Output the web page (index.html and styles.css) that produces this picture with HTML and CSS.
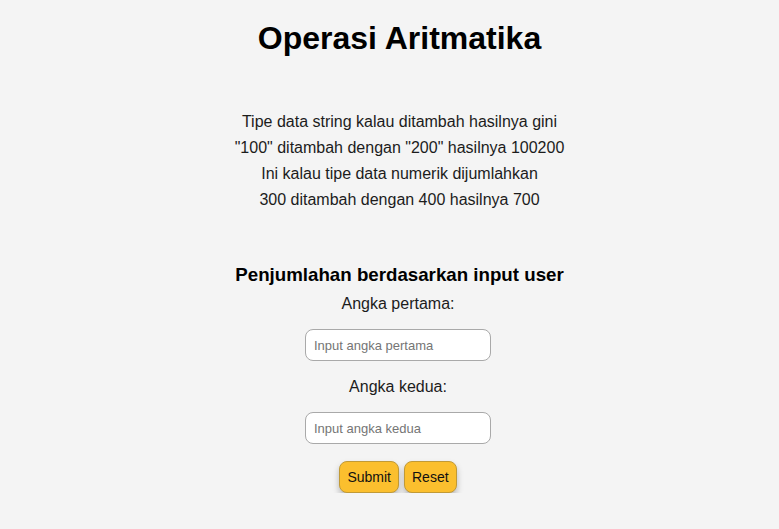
FILE: index.html
```html
<!DOCTYPE html>
<html lang="id">
<head>
<meta charset="utf-8">
<title>Operasi Aritmatika</title>
<link rel="stylesheet" href="styles.css">
</head>
<body>
<main class="page">
  <h1 class="title">Operasi Aritmatika</h1>
  <p class="info">Tipe data string kalau ditambah hasilnya gini<br>"100" ditambah dengan "200" hasilnya 100200<br>Ini kalau tipe data numerik dijumlahkan<br>300 ditambah dengan 400 hasilnya 700</p>
  <h2 class="subtitle">Penjumlahan berdasarkan input user</h2>
  <form class="form">
    <label class="label label-first" for="a1">Angka pertama:</label>
    <input class="field" id="a1" type="text" placeholder="Input angka pertama">
    <label class="label" for="a2">Angka kedua:</label>
    <input class="field" id="a2" type="text" placeholder="Input angka kedua">
    <div class="actions">
      <button class="btn" type="button">Submit</button>
      <button class="btn" type="reset">Reset</button>
    </div>
  </form>
</main>
</body>
</html>
```

FILE: styles.css
```css
html, body {
  margin: 0;
  padding: 0;
  background: #f4f4f4;
}
body {
  font-family: "Liberation Sans", Arial, sans-serif;
  color: #1c1c1c;
  padding-left: 20px;
}
.page {
  display: flex;
  flex-direction: column;
  align-items: center;
}
.title {
  margin: 20px 0 0;
  font-size: 32px;
  line-height: 37px;
  font-weight: bold;
  color: #000;
}
.info {
  margin: 52px 0 0;
  font-size: 16px;
  line-height: 26px;
  text-align: center;
}
.subtitle {
  margin: 51px 0 0;
  font-size: 18.72px;
  line-height: 22px;
  font-weight: bold;
  color: #000;
}
.form {
  display: flex;
  flex-direction: column;
  align-items: center;
  margin-right: 3px;
}
.label {
  margin-top: 17px;
  font-size: 16px;
  line-height: 18px;
}
.label-first {
  margin-top: 9px;
}
.field {
  margin-top: 16px;
  box-sizing: border-box;
  width: 186px;
  height: 32px;
  padding: 0 8px;
  border: 1px solid #a9a9a9;
  border-radius: 8px;
  background: #fff;
  font-family: "Liberation Sans", Arial, sans-serif;
  font-size: 13px;
  color: #222;
}
.field::placeholder {
  color: #757575;
}
.actions {
  margin-top: 17px;
  display: flex;
  gap: 5px;
}
.btn {
  box-sizing: border-box;
  height: 32px;
  padding: 0 7px;
  border: 1px solid #c19a36;
  border-radius: 8px;
  background: #fbbf2e;
  font-family: "Liberation Sans", Arial, sans-serif;
  font-size: 14px;
  color: #111;
  box-shadow: 0 4px 6px rgba(0, 0, 0, 0.25);
  cursor: pointer;
}
```
